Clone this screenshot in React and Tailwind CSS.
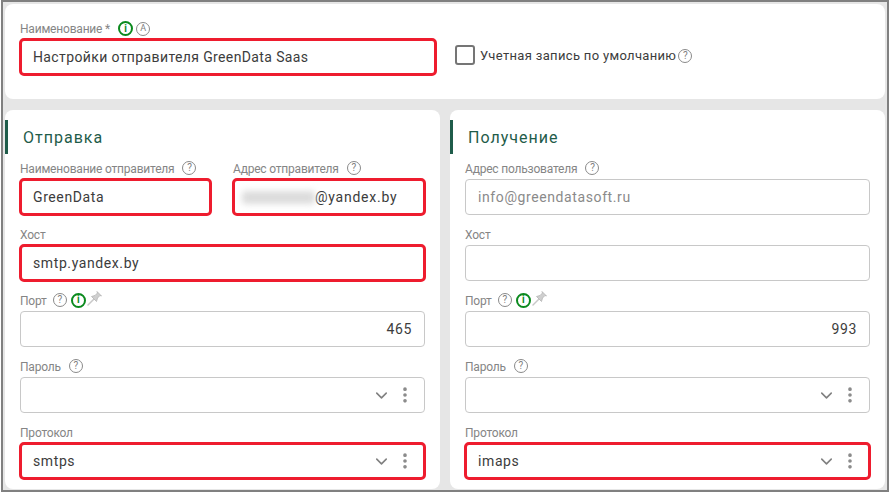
import React from 'react';
import { ChevronDown, EllipsisVertical } from 'lucide-react';

const RED = 'outline-3 -outline-offset-2 outline-[#ee1c2e]';

function Help() {
  return (
    <span className="flex h-[14px] w-[14px] items-center justify-center rounded-full border border-[#8a8a8a] text-[10px] leading-none text-[#808080]">?</span>
  );
}

function Info() {
  return (
    <span className="flex h-[15px] w-[15px] items-center justify-center rounded-full border-2 border-[#0b8a1e] text-[10px] font-bold leading-none text-[#0b8a1e]">i</span>
  );
}

function PinIcon() {
  return (
    <svg width="16" height="16" viewBox="0 0 16 16" className="ml-[1px] -translate-y-[2px]">
      <path d="M1 15 L7 9" stroke="#c8c8c8" strokeWidth="1.5" strokeLinecap="round" />
      <path d="M4.5 6.5 L9.5 11.5 L10.5 8 L13 5.5 L14.5 6 L10 1.5 L10.5 3 L8 5.5 Z" fill="#cfcfcf" stroke="#b4b4b4" strokeWidth="0.8" strokeLinejoin="round" />
    </svg>
  );
}

function Label({ text, help, port }) {
  return (
    <div className="flex h-[22px] items-center text-[12px] tracking-[-0.2px] text-[#858585]">
      <span className="pt-[1px]">{text}</span>
      {help && <span className={port ? 'ml-[6px]' : 'ml-[8px]'}><Help /></span>}
      {port && (
        <span className="ml-[4px] flex items-center">
          <Info />
          <PinIcon />
        </span>
      )}
    </div>
  );
}

function Input({ value, right, red }) {
  return (
    <div className={`flex h-[36px] items-center rounded-[4px] border border-[#c8c8c8] bg-white px-[12px] text-[14px] tracking-[0.6px] text-[#3c3c3c] ${right ? 'justify-end' : ''} ${red ? RED : ''}`}>
      {value}
    </div>
  );
}

function Select({ value, red }) {
  return (
    <div className={`flex h-[36px] items-center rounded-[4px] border border-[#c8c8c8] bg-white pl-[12px] pr-[9px] text-[14px] tracking-[0.6px] text-[#3c3c3c] ${red ? RED : ''}`}>
      <span className="flex-1">{value}</span>
      <ChevronDown size={19} strokeWidth={2} className="text-[#808080]" />
      <EllipsisVertical size={20} strokeWidth={2.4} className="ml-[4px] text-[#8a8a8a]" />
    </div>
  );
}

function Section({ title, children }) {
  return (
    <div className="flex-1 rounded-[8px] bg-white pt-[10px]">
      <div className="flex h-[34px] items-center border-l-[3px] border-[#1f5c4a] pl-[15px] text-[16px] tracking-[1px] text-[#1f5c4a]">
        <span className="pt-[1px]">{title}</span>
      </div>
      <div className="mt-[3px] flex flex-col gap-[8px] px-[15px]">{children}</div>
    </div>
  );
}

export default function App() {
  return (
    <div className="h-[494px] w-[890px] overflow-hidden bg-white pb-[2px] pl-[1px] pr-[1px] font-['Roboto',sans-serif]">
      <div className="flex h-full flex-col gap-[11px] border-2 border-[#808080] bg-[#e6e6e6] pb-[1px] pl-[2px] pr-[2px] pt-[2px]">
        <div className="flex h-[95px] rounded-[8px] bg-white pl-[15px] pr-[15px]">
          <div className="w-[416px]">
            <div className="mt-[14px] flex h-[21px] items-center text-[12px] tracking-[-0.2px] text-[#858585]">
              <span className="pt-[1px]">Наименование *</span>
              <span className="ml-[8px] flex items-center gap-[3px]">
                <Info />
                <span className="flex h-[14px] w-[14px] items-center justify-center rounded-full border border-[#8a8a8a] text-[9px] leading-none text-[#808080]">A</span>
              </span>
            </div>
            <div className={`flex h-[36px] items-center rounded-[4px] border border-[#c8c8c8] bg-white px-[12px] text-[14px] tracking-[0.38px] text-[#3c3c3c] ${RED}`}>
              Настройки отправителя GreenData Saas
            </div>
          </div>
          <div className="ml-[19px] mt-[41px] flex h-[20px] items-center">
            <span className="h-[20px] w-[20px] rounded-[3px] border-2 border-[#757575]" />
            <span className="ml-[5px] pt-[1px] text-[13px] tracking-[0.33px] text-[#3c3c3c]">Учетная запись по умолчанию</span>
            <span className="ml-[2px] pt-[2px]"><Help /></span>
          </div>
        </div>
        <div className="flex flex-1 gap-[10px]">
          <Section title="Отправка">
            <div className="flex gap-[22px]">
              <div className="w-[191px]">
                <Label text="Наименование отправителя" help />
                <Input value="GreenData" red />
              </div>
              <div className="flex-1">
                <Label text="Адрес отправителя" help />
                <Input
                  red
                  value={
                    <span className="-ml-[4px] flex items-center">
                      <span className="h-[13px] w-[73px] rounded-[3px] bg-[#dcdcdc] blur-[3px]" />
                      <span className="tracking-[0.75px]">@yandex.by</span>
                    </span>
                  }
                />
              </div>
            </div>
            <div>
              <Label text="Хост" />
              <Input value="smtp.yandex.by" red />
            </div>
            <div>
              <Label text="Порт" help port />
              <Input value="465" right />
            </div>
            <div>
              <Label text="Пароль" help />
              <Select />
            </div>
            <div>
              <Label text="Протокол" />
              <Select value="smtps" red />
            </div>
          </Section>
          <Section title="Получение">
            <div>
              <Label text="Адрес пользователя" help />
              <div className="flex h-[36px] items-center rounded-[4px] border border-[#c8c8c8] bg-white px-[12px] text-[14px] tracking-[0.6px] text-[#8a8a8a]">info@greendatasoft.ru</div>
            </div>
            <div>
              <Label text="Хост" />
              <Input />
            </div>
            <div>
              <Label text="Порт" help port />
              <Input value="993" right />
            </div>
            <div>
              <Label text="Пароль" help />
              <Select />
            </div>
            <div>
              <Label text="Протокол" />
              <Select value="imaps" red />
            </div>
          </Section>
        </div>
      </div>
    </div>
  );
}
